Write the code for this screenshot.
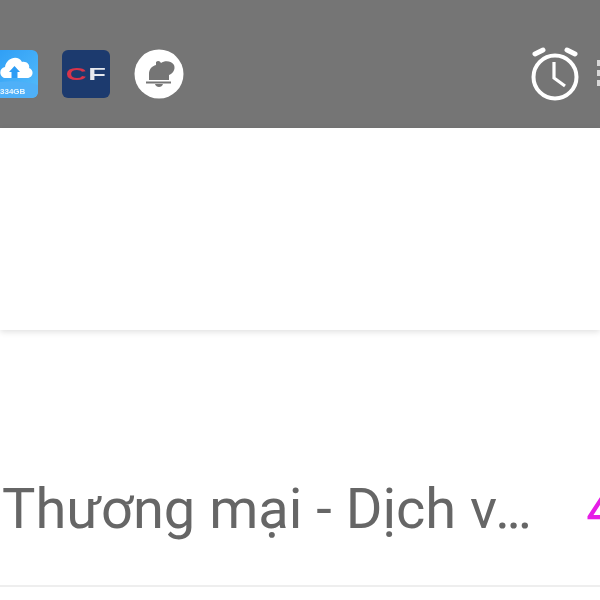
<div class="screen">
  <header class="status">
    <div class="app-icons">
      <div class="app cloud">
        <svg viewBox="0 0 48 48" width="48" height="48">
          <defs><linearGradient id="cg" x1="0" y1="0" x2="1" y2="1"><stop offset="0" stop-color="#2c9cf5"/><stop offset="1" stop-color="#55bcfb"/></linearGradient></defs>
          <rect width="48" height="48" rx="5" fill="url(#cg)"/>
          <path d="M0 34 Q24 28 48 35 V43 Q48 48 43 48 H0Z" fill="#4fb0f8"/>
          <path d="M17 28 C9 29 8 18 15 17 C16 8 28 4 32 12 C38 11 40 16 39 18 C45 20 43 29 36 28Z" fill="#fff"/>
          <path d="M19 22 L24.500 16 L30 22 H27.500 V28 H21.500 V22Z" fill="#2c9cf5"/>
          <text x="10" y="44" class="tiny">334GB</text>
        </svg>
      </div>
      <div class="app cf">
        <span class="c">C</span><span class="f">F</span>
      </div>
      <div class="bell">
        <svg viewBox="0 0 50 50" width="50" height="50">
          <circle cx="25" cy="25" r="24.500" fill="#fff"/>
          <path d="M15 31 V25 C15 20 18 17 22 16 L22 13 C24 11 26 12 27 14 C31 11 38 12 40 16 C42 21 38 25 35 26 L35 31Z" fill="#757575"/>
          <rect x="12" y="32.500" width="25" height="2" fill="#757575"/>
          <path d="M21 35 H29 C28 39 22 39 21 35Z" fill="#757575"/>
        </svg>
      </div>
    </div>
    <div class="right-icons">
      <svg class="clock" viewBox="0 0 52 56" width="52" height="56">
        <circle cx="26" cy="30" r="21.500" fill="none" stroke="#fff" stroke-width="4"/>
        <path d="M25 15 V31 L36 39" fill="none" stroke="#fff" stroke-width="3.200"/>
        <path d="M6 7 L14 3 M46 7 L38 3" stroke="#fff" stroke-width="5" stroke-linecap="round"/>
      </svg>
      <div class="dots"><i></i><i></i><i></i></div>
    </div>
  </header>
  <section class="blank"></section>
  <section class="row">
    <span class="label">Thương mại - Dịch v<span class="more">...</span></span>
    <span class="value">4</span>
  </section>
</div>

<style>
  :global(body) { margin: 0; background: #fff; }
  .screen { width: 600px; height: 600px; overflow: hidden; background: #fff; font-family: Roboto, sans-serif; filter: blur(0.5px); }
  .status {
    height: 128px; box-sizing: border-box; padding-top: 20px; background: #757575; display: flex; align-items: center;
    justify-content: space-between;
  }
  .app-icons { display: flex; align-items: center; margin-left: -10px; gap: 24px; }
  .app { width: 48px; height: 48px; border-radius: 6px; overflow: hidden; }
  .cloud svg { display: block; }
  .tiny { font: bold 8px "Liberation Sans", sans-serif; fill: #e8f6ff; }
  .cf {
    background: #1c3a6e; display: flex; align-items: center; justify-content: center;
    font: 900 17px/1 "Liberation Sans", sans-serif;
  }
  .c { color: #d8344a; transform: scaleX(1.7); }
  .f { color: #e6e8ee; transform: scaleX(1.7); margin-left: 10px; }
  .bell { width: 50px; height: 50px; }
  .bell svg { display: block; }
  .right-icons { display: flex; align-items: center; gap: 16px; margin-right: -3px; }
  .clock { display: block; margin-top: 2px; }
  .dots { display: flex; flex-direction: column; gap: 4px; width: 6px; margin-top: -2px; }
  .dots i { display: block; width: 6px; height: 6px; background: #d8d8d8; }
  .blank { height: 202px; background: #fff; box-shadow: 0 2px 6px rgba(0,0,0,.12); position: relative; }
  .row {
    height: 257px; box-sizing: border-box; padding-top: 142px; display: flex;
    justify-content: space-between; border-bottom: 2px solid #eee; background: #fff;
    white-space: nowrap;
  }
  .label { font-size: 56px; line-height: 74px; color: #666; padding-left: 2px; }
  .more { letter-spacing: -3.500px; margin-left: -2px; }
  .value { font-size: 58px; line-height: 74px; color: #e61ee6; width: 14px; overflow: hidden; }
</style>
